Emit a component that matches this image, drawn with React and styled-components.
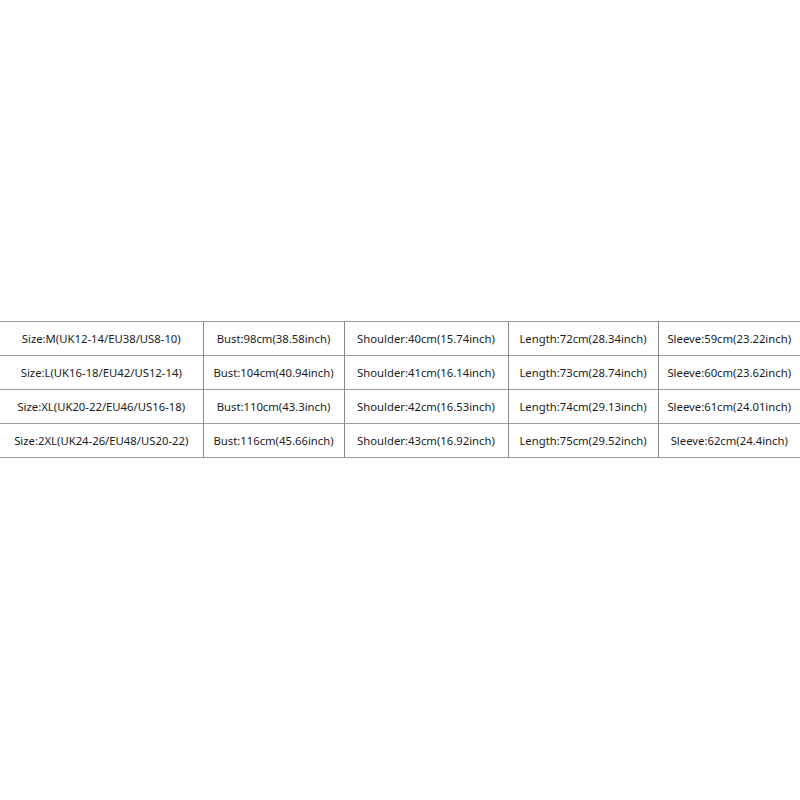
import styled, { createGlobalStyle } from 'styled-components';

const GlobalStyle = createGlobalStyle`
  html, body {
    margin: 0;
    padding: 0;
    background: #ffffff;
  }
`;

const Page = styled.main`
  width: 800px;
  height: 800px;
  padding-top: 321px;
  box-sizing: border-box;
  background: #ffffff;
`;

const SizeTable = styled.table`
  width: 800px;
  border-collapse: collapse;
  table-layout: fixed;
  font-family: "Noto Sans", "Open Sans", sans-serif;
  font-size: 11.3px;
  color: #1c1c1c;
`;

const Row = styled.tr`
  height: 34px;
  border-top: 1px solid #9a9a9a;
  border-bottom: 1px solid #9a9a9a;
`;

const Cell = styled.td`
  padding: 0;
  text-align: center;
  vertical-align: middle;
  white-space: nowrap;
  border-left: ${({ $first }) => ($first ? 'none' : '1px solid #8a8a8a')};
`;

const columns = [203, 141, 164, 150, 142];

const rows = [
  ['Size:M(UK12-14/EU38/US8-10)', 'Bust:98cm(38.58inch)', 'Shoulder:40cm(15.74inch)', 'Length:72cm(28.34inch)', 'Sleeve:59cm(23.22inch)'],
  ['Size:L(UK16-18/EU42/US12-14)', 'Bust:104cm(40.94inch)', 'Shoulder:41cm(16.14inch)', 'Length:73cm(28.74inch)', 'Sleeve:60cm(23.62inch)'],
  ['Size:XL(UK20-22/EU46/US16-18)', 'Bust:110cm(43.3inch)', 'Shoulder:42cm(16.53inch)', 'Length:74cm(29.13inch)', 'Sleeve:61cm(24.01inch)'],
  ['Size:2XL(UK24-26/EU48/US20-22)', 'Bust:116cm(45.66inch)', 'Shoulder:43cm(16.92inch)', 'Length:75cm(29.52inch)', 'Sleeve:62cm(24.4inch)'],
];

const App = () => (
  <>
    <GlobalStyle />
    <Page>
      <SizeTable>
        <colgroup>
          {columns.map((w, i) => (
            <col key={i} style={{ width: `${w}px` }} />
          ))}
        </colgroup>
        <tbody>
          {rows.map((row) => (
            <Row key={row[0]}>
              {row.map((text, i) => (
                <Cell key={text} $first={i === 0}>{text}</Cell>
              ))}
            </Row>
          ))}
        </tbody>
      </SizeTable>
    </Page>
  </>
);

export default App;
